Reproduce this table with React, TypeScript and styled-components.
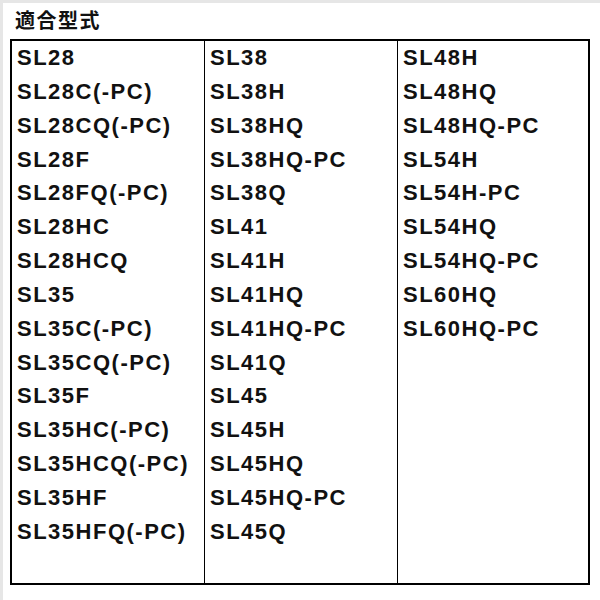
import React from "react";
import styled, { createGlobalStyle } from "styled-components";

const GlobalStyle = createGlobalStyle`
  html, body {
    margin: 0;
    padding: 0;
    background: #fff;
  }
  body {
    font-family: "Liberation Sans", Arial, sans-serif;
    color: #111;
  }
`;

const Page = styled.div`
  width: 600px;
  height: 600px;
  box-sizing: border-box;
  border-top: 3px solid #e6e6e6;
  border-left: 3px solid #e6e6e6;
  padding: 4px 0 0 7px;
`;

const Title = styled.h2`
  margin: 0 0 6px 5px;
  font-family: "Noto Sans CJK JP", sans-serif;
  font-weight: 700;
  font-size: 20px;
  line-height: 26px;
  letter-spacing: 1.5px;
`;

const Table = styled.div`
  width: 580px;
  height: 546px;
  box-sizing: border-box;
  border: 2px solid #000;
  display: grid;
  grid-template-columns: 193px 193px 1fr;
`;

const Column = styled.ul<{ $last?: boolean }>`
  list-style: none;
  margin: 0;
  padding: 0 0 0 5px;
  border-right: ${(p) => (p.$last ? "none" : "1px solid #000")};
`;

const Item = styled.li`
  font-weight: 700;
  font-size: 22px;
  line-height: 33.85px;
  letter-spacing: 1.5px;
  white-space: nowrap;
`;

const columns: string[][] = [
  [
    "SL28",
    "SL28C(-PC)",
    "SL28CQ(-PC)",
    "SL28F",
    "SL28FQ(-PC)",
    "SL28HC",
    "SL28HCQ",
    "SL35",
    "SL35C(-PC)",
    "SL35CQ(-PC)",
    "SL35F",
    "SL35HC(-PC)",
    "SL35HCQ(-PC)",
    "SL35HF",
    "SL35HFQ(-PC)",
  ],
  [
    "SL38",
    "SL38H",
    "SL38HQ",
    "SL38HQ-PC",
    "SL38Q",
    "SL41",
    "SL41H",
    "SL41HQ",
    "SL41HQ-PC",
    "SL41Q",
    "SL45",
    "SL45H",
    "SL45HQ",
    "SL45HQ-PC",
    "SL45Q",
  ],
  [
    "SL48H",
    "SL48HQ",
    "SL48HQ-PC",
    "SL54H",
    "SL54H-PC",
    "SL54HQ",
    "SL54HQ-PC",
    "SL60HQ",
    "SL60HQ-PC",
  ],
];

export default function App() {
  return (
    <>
      <GlobalStyle />
      <Page>
        <Title>適合型式</Title>
        <Table>
          {columns.map((col, i) => (
            <Column key={i} $last={i === columns.length - 1}>
              {col.map((model) => (
                <Item key={model}>{model}</Item>
              ))}
            </Column>
          ))}
        </Table>
      </Page>
    </>
  );
}
